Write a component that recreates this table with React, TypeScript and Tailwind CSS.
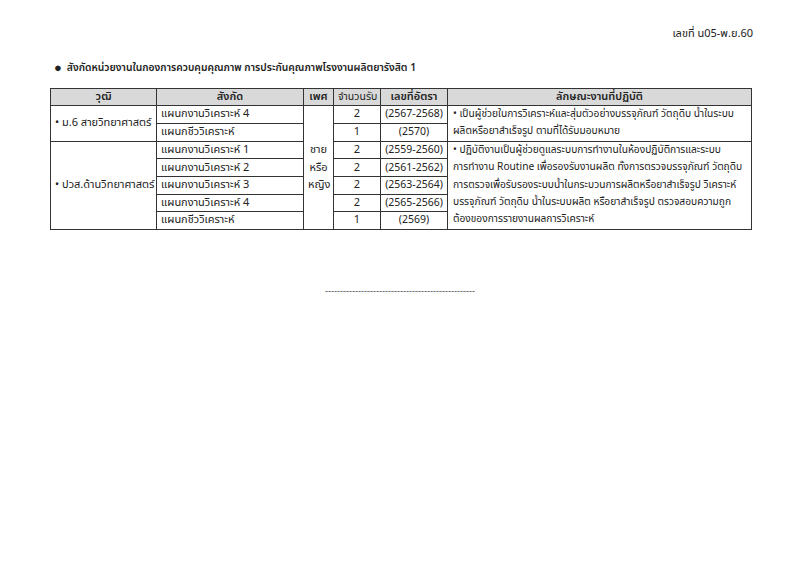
const rows = [
  { dept: 'แผนกงานวิเคราะห์ 4', num: '2', rate: '(2567-2568)' },
  { dept: 'แผนกชีววิเคราะห์', num: '1', rate: '(2570)' },
  { dept: 'แผนกงานวิเคราะห์ 1', num: '2', rate: '(2559-2560)' },
  { dept: 'แผนกงานวิเคราะห์ 2', num: '2', rate: '(2561-2562)' },
  { dept: 'แผนกงานวิเคราะห์ 3', num: '2', rate: '(2563-2564)' },
  { dept: 'แผนกงานวิเคราะห์ 4', num: '2', rate: '(2565-2566)' },
  { dept: 'แผนกชีววิเคราะห์', num: '1', rate: '(2569)' },
];

const duty1 = [
  '• เป็นผู้ช่วยในการวิเคราะห์และสุ่มตัวอย่างบรรจุภัณฑ์ วัตถุดิบ น้ำในระบบ',
  'ผลิตหรือยาสำเร็จรูป ตามที่ได้รับมอบหมาย',
];

const duty2 = [
  '• ปฏิบัติงานเป็นผู้ช่วยดูแลระบบการทำงานในห้องปฏิบัติการและระบบ',
  'การทำงาน Routine เพื่อรองรับงานผลิต ทั้งการตรวจบรรจุภัณฑ์ วัตถุดิบ',
  'การตรวจเพื่อรับรองระบบน้ำในกระบวนการผลิตหรือยาสำเร็จรูป วิเคราะห์',
  'บรรจุภัณฑ์ วัตถุดิบ น้ำในระบบผลิต หรือยาสำเร็จรูป ตรวจสอบความถูก',
  'ต้องของการรายงานผลการวิเคราะห์',
];

export default function App() {
  const cell = 'border border-[#333] px-[4px] h-[17px] leading-[16px] whitespace-nowrap overflow-hidden';
  return (
    <div className="w-[800px] h-[566px] bg-white text-[#222] text-[11px] font-['Tahoma','Noto_Sans_Thai','Noto_Sans',sans-serif]">
      {/* document number */}
      <div className="flex justify-end pr-[47px] pt-[26px] text-[11px]">เลขที่ น05-พ.ย.60</div>

      {/* section title */}
      <div className="flex items-center gap-[5px] pl-[54px] mt-[18px] text-[10.3px] font-semibold">
        <span className="text-[13px] leading-none">●</span>
        <span>สังกัดหน่วยงานในกองการควบคุมคุณภาพ การประกันคุณภาพโรงงานผลิตยารังสิต 1</span>
      </div>

      {/* table */}
      <table className="ml-[50px] mt-[12px] w-[702px] border-collapse table-fixed">
        <colgroup>
          <col className="w-[106px]" />
          <col className="w-[147px]" />
          <col className="w-[30px]" />
          <col className="w-[47px]" />
          <col className="w-[67px]" />
          <col />
        </colgroup>
        <thead>
          <tr className="bg-[#d9d9d9]">
            <th className={`${cell} font-semibold`}>วุฒิ</th>
            <th className={`${cell} font-semibold`}>สังกัด</th>
            <th className={`${cell} px-0 font-semibold`}>เพศ</th>
            <th className={`${cell} px-0 font-normal text-[10.5px]`}>จำนวนรับ</th>
            <th className={`${cell} px-0 font-semibold`}>เลขที่อัตรา</th>
            <th className={`${cell} font-semibold`}>ลักษณะงานที่ปฏิบัติ</th>
          </tr>
        </thead>
        <tbody>
          {rows.map((r, i) => (
            <tr key={i}>
              {i === 0 && <td rowSpan={2} className={cell}>• ม.6 สายวิทยาศาสตร์</td>}
              {i === 2 && <td rowSpan={5} className={cell}>• ปวส.ด้านวิทยาศาสตร์</td>}
              <td className={cell}>{r.dept}</td>
              {i === 0 && (
                <td rowSpan={7} className={`${cell} text-center px-0`}>
                  <div className="flex flex-col leading-[17.4px]">
                    <span>ชาย</span>
                    <span>หรือ</span>
                    <span>หญิง</span>
                  </div>
                </td>
              )}
              <td className={`${cell} text-center`}>{r.num}</td>
              <td className={`${cell} text-center px-0 text-[10.5px]`}>{r.rate}</td>
              {i === 0 && (
                <td rowSpan={2} className={`${cell} align-top px-[5px] text-[10.2px]`}>
                  <div className="flex flex-col leading-[17.4px]">
                    {duty1.map((l) => <span key={l}>{l}</span>)}
                  </div>
                </td>
              )}
              {i === 2 && (
                <td rowSpan={5} className={`${cell} align-top px-[5px] text-[10.2px]`}>
                  <div className="flex flex-col leading-[17.4px]">
                    {duty2.map((l) => <span key={l}>{l}</span>)}
                  </div>
                </td>
              )}
            </tr>
          ))}
        </tbody>
      </table>

      {/* closing rule */}
      <div className="flex justify-center mt-[57px]">
        <span className="whitespace-nowrap text-[9px] leading-none text-[#444] font-['Liberation_Sans',sans-serif]">
          {'-'.repeat(50)}
        </span>
      </div>
    </div>
  );
}
